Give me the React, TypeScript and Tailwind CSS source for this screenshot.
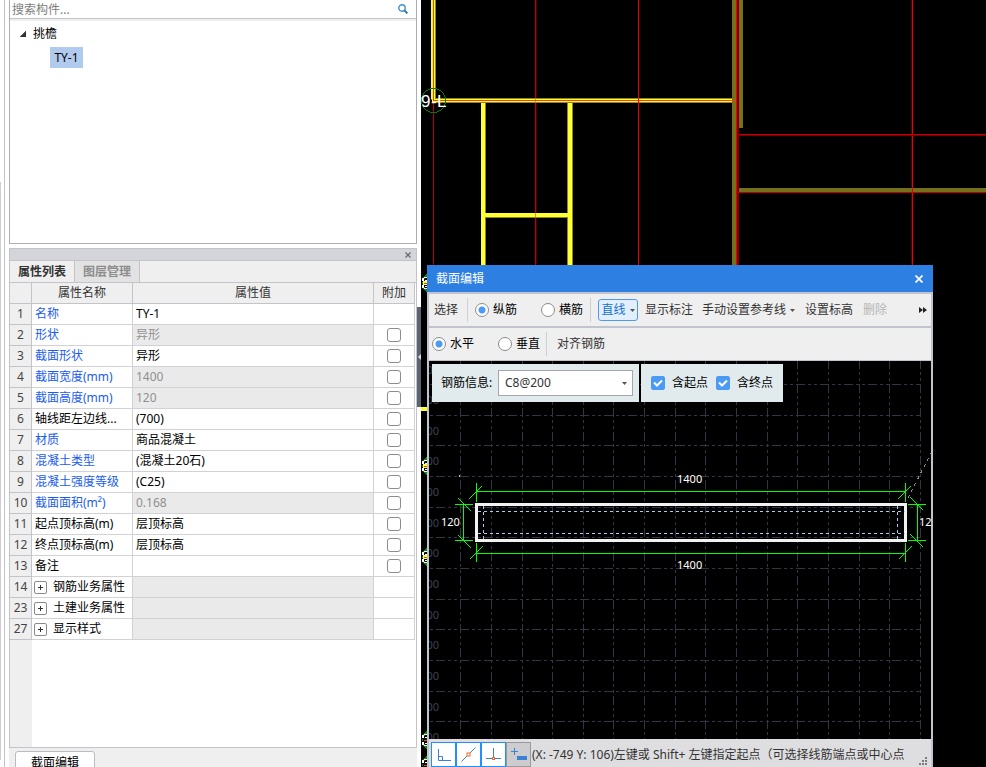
import React from 'react';

interface PropertyRow {
    no: number;
    name: string;
    value?: string;
    linked?: boolean;
    locked?: boolean;
    group?: boolean;
    noCheck?: boolean;
}

const rows: PropertyRow[] = [
    { no: 1, name: '名称', value: 'TY-1', linked: true, noCheck: true },
    { no: 2, name: '形状', value: '异形', linked: true, locked: true },
    { no: 3, name: '截面形状', value: '异形', linked: true },
    { no: 4, name: '截面宽度(mm)', value: '1400', linked: true, locked: true },
    { no: 5, name: '截面高度(mm)', value: '120', linked: true, locked: true },
    { no: 6, name: '轴线距左边线...', value: '(700)' },
    { no: 7, name: '材质', value: '商品混凝土', linked: true },
    { no: 8, name: '混凝土类型', value: '(混凝土20石)', linked: true },
    { no: 9, name: '混凝土强度等级', value: '(C25)', linked: true },
    { no: 10, name: '截面面积(m²)', value: '0.168', linked: true, locked: true },
    { no: 11, name: '起点顶标高(m)', value: '层顶标高' },
    { no: 12, name: '终点顶标高(m)', value: '层顶标高' },
    { no: 13, name: '备注' },
    { no: 14, name: '钢筋业务属性', locked: true, group: true, noCheck: true },
    { no: 23, name: '土建业务属性', locked: true, group: true, noCheck: true },
    { no: 27, name: '显示样式', locked: true, group: true, noCheck: true },
];

const gridX = [460, 491, 522, 552, 583, 613, 644, 675, 705, 736, 767, 797, 828, 859, 889, 920];
const gridY = [384, 415, 445, 476, 507, 537, 568, 599, 629, 660, 691, 721];
const rulerY = [370, 400, 431, 461, 492, 523, 553, 584, 615, 645, 676, 707, 737];
const axisMarks = [283, 466, 557, 740, 765];

const Caret: React.FC<{ className?: string }> = ({ className }) => (
    <svg width="5" height="3" viewBox="0 0 5 3" className={className} aria-hidden="true">
        <path d="M0 0h5L2.5 3z" fill="#555" />
    </svg>
);

const ComponentTree: React.FC = () => (
    <section className="flex h-[244px] shrink-0 flex-col border-x border-b border-[#adadb2] bg-white">
        <div className="flex h-[19px] shrink-0 items-center border-b border-[#c3c4ca] pr-2 pl-0.5">
            <input
                type="text"
                aria-label="搜索构件"
                placeholder="搜索构件..."
                className="h-[18px] min-w-0 flex-1 bg-transparent text-xs text-black outline-none placeholder:text-[#7d7d7d]"
            />
            <button type="button" aria-label="搜索">
                <svg width="10" height="10" viewBox="0 0 10 10" fill="none">
                    <circle cx="4" cy="4" r="3.2" stroke="#3f94cc" strokeWidth="1.4" />
                    <path d="M6.4 6.4L9.4 9.4" stroke="#2b6ea3" strokeWidth="1.8" />
                </svg>
            </button>
        </div>
        <div className="h-0.5 shrink-0 bg-[#efeff1]" />
        <ul className="text-xs">
            <li>
                <div className="flex h-[26px] items-center gap-[7px] pl-2.5">
                    <svg width="6" height="6" viewBox="0 0 6 6" aria-hidden="true">
                        <path d="M6 0v6H0z" fill="#333" stroke="#222" strokeWidth="0.5" />
                    </svg>
                    <span>挑檐</span>
                </div>
                <ul className="pl-10">
                    <li className="flex h-[21px] w-[33px] items-center justify-center bg-[#b1cbee]">TY-1</li>
                </ul>
            </li>
        </ul>
    </section>
);

const PropertyTable: React.FC = () => (
    <table className="w-full table-fixed border-separate border-spacing-0 text-xs">
        <colgroup>
            <col className="w-[22px]" />
            <col className="w-[101px]" />
            <col />
            <col className="w-[41px]" />
        </colgroup>
        <thead>
            <tr className="h-[21px] bg-[#efefef] text-[#333]">
                <th className="border-r border-b border-[#c3c3c8]" />
                <th className="border-r border-b border-[#c3c3c8] p-0 leading-5 font-normal">属性名称</th>
                <th className="border-r border-b border-[#c3c3c8] p-0 leading-5 font-normal">属性值</th>
                <th className="border-r border-b border-[#c3c3c8] p-0 leading-5 font-normal">附加</th>
            </tr>
        </thead>
        <tbody>
            {rows.map((row) => (
                <tr key={row.no} className="h-[21px] bg-white">
                    <td className="border-r border-b border-[#c3c3c8] bg-[#efefef] p-0 text-center leading-5 text-[#444]">{row.no}</td>
                    <td className={`border-r border-b border-[#d2d2d4] p-0 leading-5 whitespace-nowrap ${row.linked ? 'text-[#1a5cf0]' : 'text-black'}`}>
                        {row.group ? (
                            <div className="flex items-center gap-1.5 pl-0.5">
                                <button type="button" aria-label={`展开${row.name}`} className="flex size-[13px] items-center justify-center rounded-xs border border-[#8a8a8a]">
                                    <svg width="5" height="5" viewBox="0 0 5 5">
                                        <path d="M2 0h1v2h2v1H3v2H2V3H0V2h2z" fill="#333" />
                                    </svg>
                                </button>
                                <span>{row.name}</span>
                            </div>
                        ) : (
                            <span className="pl-[3px]">{row.name}</span>
                        )}
                    </td>
                    <td className={`border-r border-b border-[#d2d2d4] p-0 pl-[3px] leading-5 ${row.locked ? 'bg-[#eaeaea] text-[#909090]' : 'text-black'}`}>{row.value}</td>
                    <td className="border-r border-b border-[#d2d2d4] p-0">
                        {!row.noCheck && (
                            <input
                                type="checkbox"
                                aria-label={`附加 ${row.name}`}
                                className="mx-auto block size-3.5 appearance-none rounded-[3px] border border-[#8c8c8c] bg-white checked:bg-[#4b9bf5]"
                            />
                        )}
                    </td>
                </tr>
            ))}
        </tbody>
    </table>
);

const PropertyDock: React.FC = () => (
    <section className="mt-1 flex min-h-0 flex-1 flex-col border border-[#c3c3c8] bg-white">
        <div className="flex h-[11px] shrink-0 items-center justify-end bg-[#d4d5da] pr-[5px]">
            <button type="button" aria-label="关闭">
                <svg width="6" height="6" viewBox="0 0 6 6">
                    <path d="M0.5 0.5l5 5M5.5 0.5l-5 5" stroke="#6c6c70" strokeWidth="1.3" />
                </svg>
            </button>
        </div>
        <div role="tablist" className="flex h-[23px] shrink-0 border-y border-[#c3c3c8] bg-[#efefef] text-xs">
            <button type="button" role="tab" aria-selected="true" className="w-[65px] border-r border-[#c3c3c8] font-bold text-[#333]">
                属性列表
            </button>
            <button type="button" role="tab" aria-selected="false" className="w-[65px] border-r border-[#c3c3c8] bg-[#e2e2e3] font-bold text-[#8c8c8c]">
                图层管理
            </button>
        </div>
        <div className="flex min-h-0 flex-1 flex-col pr-px">
            <PropertyTable />
            <div className="w-[22px] flex-1 bg-[#efefef]" />
        </div>
    </section>
);

const PlanDrawing: React.FC = () => (
    <svg className="absolute inset-0 size-full" shapeRendering="crispEdges" aria-hidden="true">
        <g transform="translate(-421 0)">
            <path d="M433 103h1v400h-1zM535 0h1v500h-1z" fill="#c00000" />
            <path d="M536 0h1v500h-1zM911 0h1v500h-1z" fill="#480000" />
            <path d="M431 0h5v100h-5zM432 98h300v5H432zM481 103h5v400h-5zM567 103h6v400h-6zM486 213h82v5h-82z" fill="#8d8720" />
            <path d="M431 0h4v99h-4zM432 99h300v3H432zM481 103h4v400h-4zM568 103h4v400h-4zM485 213h83v4h-83z" fill="#ffff32" />
            <path d="M732 0h4v600h-4zM739 0h4v128h-4zM739 188h2000v4H739z" fill="#77701b" />
            <path d="M535 99h1v3h-1zM535 213h1v4h-1z" fill="#e8962a" />
            <path d="M433 0h1v100h-1zM433 100h303v1H433z" fill="#ff3a1c" />
            <path d="M638 0h1v500h-1zM736 0h1v500h-1zM912 0h1v500h-1z" fill="#f00000" />
            <path d="M737 0h2v500h-2zM739 135h2000v1H739z" fill="#790000" />
            <path d="M739 134h2000v1H739zM736 192h2000v1H736z" fill="#c00000" />
            <circle cx="433.5" cy="100.5" r="12" fill="none" stroke="#008000" />
            <path d="M421 407h8v4h-8z" fill="#ffff32" />
            {axisMarks.map((y) => (
                <g key={y} transform={`translate(421 ${y})`}>
                    <path d="M7 -9L3 -5L2 0L3 5L7 9" fill="none" stroke="#0a8a0a" strokeWidth="1.5" />
                    <path d="M3 -6h3v1H3zM1 -5h2v3H1zM3 5h3v1H3zM1 2h2v3H1zM4 -3h2v1H4zM4 3h2v1H4z" fill="#fff" />
                    <path d="M2 -2h4v4H2z" fill={y < 600 ? '#ffff32' : '#111'} />
                    <path d="M3 0h3v1H3z" fill="#f43a20" />
                </g>
            ))}
            <g fill="#fff" fontFamily="'Liberation Sans', sans-serif" fontSize="17">
                <text x="421" y="107">9</text>
                <text x="431" y="107">-</text>
                <text x="437" y="107">L</text>
            </g>
        </g>
    </svg>
);

const SectionDrawing: React.FC = () => (
    <svg className="absolute inset-0 size-full" shapeRendering="crispEdges" aria-hidden="true">
        <g transform="translate(-429 -361)">
            <g stroke="#303643" strokeDasharray="9 3 3 3 3 3">
                {gridX.map((x) => (
                    <path key={x} d={`M${x + 0.5} 360V739`} />
                ))}
                {gridY.map((y) => (
                    <path key={y} d={`M412 ${y + 0.5}H921`} />
                ))}
            </g>
            <g fill="#3c4250" fontFamily="'Noto Sans', sans-serif" fontSize="11" textAnchor="end">
                {rulerY.map((y) => (
                    <text key={y} x="439" y={y + 4}>
                        00
                    </text>
                ))}
            </g>
            <path d="M459 475h1v2h-1z" fill="#e0c050" />
            <rect x="476.5" y="504.5" width="429" height="36" fill="none" stroke="#f2f2f2" strokeWidth="3" />
            <path d="M478 511.5H905M478 533.5H905M483.5 506V540M897.5 506V540" stroke="#a9cdf2" strokeDasharray="3 3" fill="none" />
            <g fill="#00ff00">
                <path d="M476 491h430v1H476zM476 553h430v1H476z" />
            </g>
            <g stroke="#00ff00" fill="none">
                <path d="M476.5 483V502M905.5 483V502M476.5 543V562M905.5 543V562" />
                <path d="M455 504.5H473M455 540.5H473M463.5 504V541M908 504.5H926M908 540.5H926M917.5 504V541" />
                <path d="M469 499L482 486M898 499L911 486M470 559L483 546M899 559L912 546" />
                <path d="M458 498L471 511M458 535L471 548M910 497L923 510M910 534L923 547" />
            </g>
            <path d="M908 498L931 453" stroke="#8c8c8c" strokeDasharray="3 4" />
            <g fill="#fff" fontFamily="'Noto Sans', sans-serif" fontSize="11">
                <text x="677" y="483">1400</text>
                <text x="677" y="569">1400</text>
                <text x="441" y="526">120</text>
                <text x="919" y="526">120</text>
            </g>
        </g>
    </svg>
);

interface RadioProps {
    name: string;
    label: string;
    checked?: boolean;
}

const Radio: React.FC<RadioProps> = ({ name, label, checked }) => (
    <label className="flex shrink-0 items-center gap-1 text-black">
        <input
            type="radio"
            name={name}
            defaultChecked={checked}
            className="size-3.5 appearance-none rounded-full border border-[#8c8c8c] bg-white checked:bg-[radial-gradient(circle,#4b9bf5_3px,transparent_4px)]"
        />
        <span>{label}</span>
    </label>
);

const CheckOption: React.FC<{ label: string }> = ({ label }) => (
    <label className="flex items-center gap-[7px]">
        <span className="grid">
            <input type="checkbox" defaultChecked className="peer col-start-1 row-start-1 size-3.5 appearance-none rounded-xs border border-[#8c8c8c] bg-white checked:border-[#4b9bf5] checked:bg-[#4b9bf5]" />
            <svg width="14" height="14" viewBox="0 0 14 14" className="pointer-events-none invisible col-start-1 row-start-1 peer-checked:visible">
                <path d="M3 6.5l3 3 5-5" fill="none" stroke="#fff" strokeWidth="2" />
            </svg>
        </span>
        <span>{label}</span>
    </label>
);

const Divider: React.FC = () => <span className="h-6 w-px shrink-0 bg-[#cfcfd2]" />;

const snapButton = 'flex size-[25px] shrink-0 items-center justify-center border border-[#1e90ff] bg-white';

const StatusBar: React.FC = () => (
    <footer className="flex h-[28px] shrink-0 items-end bg-[#dedee0] pl-0.5 text-xs text-[#333]">
        <button type="button" aria-label="正交" className={snapButton}>
            <svg width="14" height="14" viewBox="0 0 14 14" fill="none" stroke="#3b82d6">
                <path d="M1.5 1v11.5H14M1.5 8.5h4v4" />
            </svg>
        </button>
        <button type="button" aria-label="中点" className={snapButton}>
            <svg width="15" height="15" viewBox="0 0 15 15" fill="none">
                <path d="M0.5 14.5L14.5 0.5" stroke="#3b82d6" />
                <rect x="6" y="6" width="3" height="3" fill="#fff" stroke="#f26a1b" />
            </svg>
        </button>
        <button type="button" aria-label="垂点" className={snapButton}>
            <svg width="15" height="15" viewBox="0 0 15 15" fill="none">
                <path d="M7.5 1v11M0 11.5h15" stroke="#3b82d6" />
                <rect x="6.5" y="10.5" width="2" height="2" fill="#fff" stroke="#f26a1b" />
            </svg>
        </button>
        <button type="button" aria-label="动态输入" className="flex size-[25px] shrink-0 items-center justify-center border border-[#9a9a9c] bg-[#cdcdcf]">
            <svg width="17" height="15" viewBox="0 0 17 15" fill="none">
                <path d="M4.5 1v7M1 4.5h7" stroke="#3b82d6" />
                <path d="M7 9h10v4H7z" fill="#3b82d6" />
            </svg>
        </button>
        <p className="ml-px min-w-0 flex-1 overflow-hidden leading-6 whitespace-nowrap">(X: -749 Y: 106)左键或 Shift+ 左键指定起点（可选择线筋端点或中心点</p>
        <svg width="8" height="8" viewBox="0 0 8 8" className="mr-1 mb-0.5 ml-2 shrink-0 self-end" aria-hidden="true">
            <path d="M6 0h2v2H6zM3 3h2v2H3zM6 3h2v2H6zM0 6h2v2H0zM3 6h2v2H3zM6 6h2v2H6z" fill="#7b7b80" />
        </svg>
    </footer>
);

const SectionEditor: React.FC = () => (
    <div role="dialog" aria-label="截面编辑" className="absolute top-[265px] bottom-0 left-1.5 flex w-[506px] flex-col text-xs">
        <header className="flex h-[27px] shrink-0 items-center justify-between bg-[#2d80e2] pr-2.5 pl-[9px] text-white">
            <h2>截面编辑</h2>
            <button type="button" aria-label="关闭">
                <svg width="8" height="8" viewBox="0 0 8 8">
                    <path d="M0.5 0.5l7 7M7.5 0.5l-7 7" stroke="#fff" strokeWidth="1.7" />
                </svg>
            </button>
        </header>
        <div className="flex min-h-0 flex-1 flex-col border-x-2 border-t-2 border-[#c0c4ce]">
            <div className="flex h-[34px] shrink-0 items-center border-b-2 border-[#c0c4ce] bg-[#efefef] pr-1 pl-[5px] text-[#333]">
                <button type="button" className="mr-[9px]">选择</button>
                <Divider />
                <div className="flex gap-6 px-[7px]">
                    <Radio name="rebar" label="纵筋" checked />
                    <Radio name="rebar" label="横筋" />
                </div>
                <Divider />
                <button type="button" className="ml-[7px] flex h-[22px] w-10 shrink-0 items-center justify-center gap-1 rounded-[3px] border border-[#4b9bf5] bg-[#e3effc] text-[#1272d6]">
                    直线
                    <Caret />
                </button>
                <button type="button" className="ml-[7px] shrink-0">显示标注</button>
                <button type="button" className="ml-[9px] flex shrink-0 items-center gap-1">
                    手动设置参考线
                    <Caret />
                </button>
                <button type="button" className="ml-2.5 shrink-0">设置标高</button>
                <button type="button" disabled className="ml-2.5 shrink-0 text-[#b5b5b5]">删除</button>
                <button type="button" aria-label="更多" className="ml-auto">
                    <svg width="8" height="6" viewBox="0 0 8 6">
                        <path d="M0 0l4 3-4 3zM4 0l4 3-4 3z" fill="#222" />
                    </svg>
                </button>
            </div>
            <div className="flex h-[33px] shrink-0 items-center border-b border-[#c0c4ce] bg-[#efefef] pl-[3px] text-[#333]">
                <div className="flex gap-6 pr-1.5">
                    <Radio name="direction" label="水平" checked />
                    <Radio name="direction" label="垂直" />
                </div>
                <Divider />
                <button type="button" className="ml-2.5">对齐钢筋</button>
            </div>
            <div className="relative min-h-0 flex-1 overflow-hidden bg-black">
                <SectionDrawing />
                <form className="relative flex gap-0.5 pt-[3px] pl-[3px] text-black">
                    <div className="flex h-[38px] w-[207px] items-center justify-between bg-[#e1eaec] pr-1.5 pl-[9px]">
                        <label htmlFor="rebar-info">钢筋信息:</label>
                        <div className="grid w-[135px] items-center">
                            <select id="rebar-info" className="col-start-1 row-start-1 h-[26px] w-full appearance-none border border-[#a6a6a8] bg-white pl-1.5 text-[#333]">
                                <option>C8@200</option>
                            </select>
                            <Caret className="pointer-events-none col-start-1 row-start-1 mr-1.5 justify-self-end" />
                        </div>
                    </div>
                    <div className="flex h-[38px] w-[142px] items-center gap-2 bg-[#e1eaec] pl-2.5">
                        <CheckOption label="含起点" />
                        <CheckOption label="含终点" />
                    </div>
                </form>
            </div>
            <StatusBar />
        </div>
    </div>
);

const App: React.FC = () => (
    <main className="flex h-screen overflow-hidden bg-white font-['Noto_Sans','Noto_Sans_CJK_SC',sans-serif] text-xs text-black">
        <div className="mr-1 flex w-[5px] shrink-0 flex-col border-r border-[#c3c3cb] pt-[182px] pb-[7px]">
            <div className="w-px flex-1 bg-[#d0ccd2]" />
        </div>
        <aside className="flex w-[408px] shrink-0 flex-col">
            <ComponentTree />
            <PropertyDock />
            <div className="flex h-[19px] shrink-0 overflow-hidden bg-[#efefef] px-1.5 pt-[3px]">
                <button type="button" className="h-6 w-20 shrink-0 rounded-t-[3px] border border-[#bcbcc0] bg-white">
                    截面编辑
                </button>
            </div>
        </aside>
        <div className="w-1 shrink-0 pt-[307px]">
            <button type="button" aria-label="收起面板" className="flex h-[100px] w-1 items-center bg-[#5b6470]">
                <svg width="4" height="6" viewBox="0 0 4 6">
                    <path d="M4 0v6L1 3z" fill="#dcdcdc" />
                </svg>
            </button>
        </div>
        <div className="relative min-w-0 flex-1 overflow-hidden bg-black">
            <PlanDrawing />
            <SectionEditor />
        </div>
    </main>
);

export default App;
